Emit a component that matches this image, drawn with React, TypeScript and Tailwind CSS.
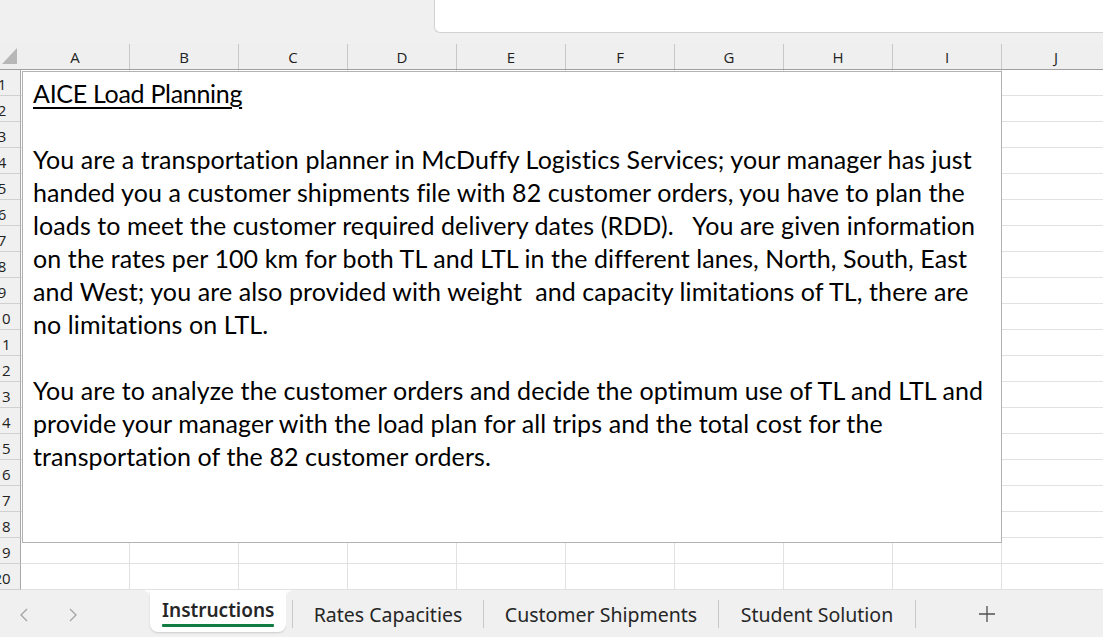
const COLS = ['A', 'B', 'C', 'D', 'E', 'F', 'G', 'H', 'I', 'J'];
const ROWS = Array.from({ length: 20 }, (_, i) => i + 1);

const PARA1 = [
  'You are a transportation planner in McDuffy Logistics Services; your manager has just',
  'handed you a customer shipments file with 82 customer orders, you have to plan the',
  'loads to meet the customer required delivery dates (RDD).   You are given information',
  'on the rates per 100 km for both TL and LTL in the different lanes, North, South, East',
  'and West; you are also provided with weight  and capacity limitations of TL, there are',
  'no limitations on LTL.',
];
const PARA2 = [
  'You are to analyze the customer orders and decide the optimum use of TL and LTL and',
  'provide your manager with the load plan for all trips and the total cost for the',
  'transportation of the 82 customer orders.',
];

export default function App() {
  return (
    <div className="relative w-[1103px] h-[637px] overflow-hidden bg-white font-['Noto_Sans',sans-serif] text-black">
      {/* top strip + formula box */}
      <div className="flex h-[44px] bg-[#f0f0f0]">
        <div className="w-[434px]" />
        <div className="flex-1 h-[33px] bg-white border-l border-b border-[#d2d2d2] rounded-bl-[6px]" />
      </div>

      {/* column headers */}
      <div className="flex h-[26px] bg-[#efefef] border-b border-[#9f9f9f] font-['Open_Sans',sans-serif]">
        <div className="w-[21px] shrink-0">
          <svg width="21" height="25" viewBox="0 0 21 25">
            <polygon points="2,20 17,4 17,20" fill="#b7b7b7" />
          </svg>
        </div>
        {COLS.map((c) => (
          <div key={c} className="w-[109px] shrink-0 border-r border-[#c8c8c8] flex items-center justify-center pt-[2px] text-[15px] text-[#222]">
            {c}
          </div>
        ))}
      </div>

      {/* grid */}
      {ROWS.map((r) => (
        <div key={r} className="flex h-[26px]">
          <div className="w-[21px] shrink-0 overflow-hidden bg-[#f0f0f0] border-b border-r border-b-[#d0d0d0] border-r-[#a8a8a8] flex items-center pt-[3px] font-['Open_Sans',sans-serif]">
            <div className="w-[40px] -ml-[18px] shrink-0 text-center text-[15px] leading-none text-[#222]">{r}</div>
          </div>
          {COLS.map((c) => (
            <div key={c} className="w-[109px] shrink-0 border-r border-b border-[#e1e1e1]" />
          ))}
        </div>
      ))}

      {/* floating text box */}
      <div className="absolute left-[22px] top-[71px] w-[980px] h-[472px] border border-[#b2b2b2] bg-white pl-[10px] pt-[5px] font-['Lato',sans-serif] text-[25px] tracking-[0.1px] leading-[33px] text-black">
        <div><span className="underline decoration-2 underline-offset-[4px] tracking-[-0.3px]">AICE Load Planning</span></div>
        <div>&nbsp;</div>
        {PARA1.map((l) => <div key={l} className="whitespace-pre">{l}</div>)}
        <div>&nbsp;</div>
        {PARA2.map((l) => <div key={l} className="whitespace-pre">{l}</div>)}
      </div>

      {/* sheet tabs */}
      <div className="flex h-[47px] bg-white">
        <div className="w-[150px] shrink-0 bg-[#f0f0f0] rounded-tr-[8px] flex items-center pl-[19px] gap-[39px] pt-[2px]">
          <svg width="10" height="14" viewBox="0 0 10 14"><polyline points="8,1 2,7 8,13" fill="none" stroke="#a3a3a3" strokeWidth="1.3" /></svg>
          <svg width="10" height="14" viewBox="0 0 10 14"><polyline points="2,1 8,7 2,13" fill="none" stroke="#a3a3a3" strokeWidth="1.3" /></svg>
        </div>
        <div className="w-[136px] shrink-0 bg-[#f0f0f0] flex flex-col">
          <div className="h-[42px] bg-white rounded-b-[8px] shadow-[0_1px_2px_rgba(0,0,0,0.15)] px-[12px] pt-[10px]">
            <div className="text-[19px] leading-[20px] font-semibold text-[#262626] whitespace-nowrap">Instructions</div>
            <div className="mt-[4px] h-[3px] w-[112px] bg-[#107c41] rounded-[1px]" />
          </div>
        </div>
        <div className="flex-1 bg-[#f0f0f0] rounded-tl-[8px] flex items-center pl-[6px] text-[19.5px] leading-none text-[#262626]">
          <div className="w-px h-[28px] bg-[#c8c8c8]" />
          <div className="w-[190px] text-center mt-[2px] whitespace-nowrap">Rates Capacities</div>
          <div className="w-px h-[28px] bg-[#c8c8c8]" />
          <div className="w-[234px] text-center mt-[2px] whitespace-nowrap">Customer Shipments</div>
          <div className="w-px h-[28px] bg-[#c8c8c8]" />
          <div className="w-[196px] text-center mt-[2px] whitespace-nowrap">Student Solution</div>
          <div className="w-px h-[28px] bg-[#c8c8c8]" />
          <div className="w-[142px] flex justify-center">
            <svg width="18" height="18" viewBox="0 0 18 18"><path d="M9 1v16M1 9h16" stroke="#505050" strokeWidth="1.3" /></svg>
          </div>
        </div>
      </div>
    </div>
  );
}
